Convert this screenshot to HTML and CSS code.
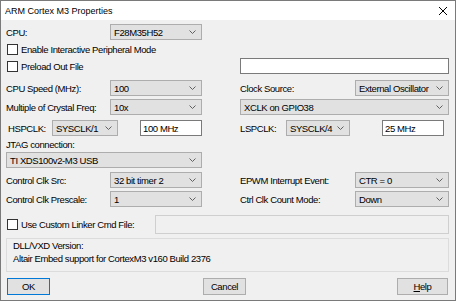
FILE: index.html
```html
<!DOCTYPE html>
<html lang="en">
<head>
    <meta charset="UTF-8">
    <title>ARM Cortex M3 Properties</title>
    <link rel="stylesheet" href="styles.css">
</head>
<body>
    <div class="dialog">
        <div class="titlebar">
            <span class="title">ARM Cortex M3 Properties</span>
            <svg class="close" width="10" height="10" viewBox="0 0 10 10"><path d="M1 1L9 9M9 1L1 9" stroke="#000" stroke-width="1"/></svg>
        </div>
        <div class="content">
            <div class="row r-cpu">
                <div class="half left">
                    <span class="lbl">CPU:</span>
                    <div class="combo">F28M35H52<svg class="chev" width="7" height="4" viewBox="0 0 7 4"><path d="M0.5 0.5L3.5 3.5L6.5 0.5" fill="none" stroke="#606060"/></svg></div>
                </div>
            </div>
            <div class="row r-check1">
                <label class="check"><span class="box"></span>Enable Interactive Peripheral Mode</label>
            </div>
            <div class="row r-preload">
                <div class="half left">
                    <label class="check"><span class="box"></span>Preload Out File</label>
                </div>
                <div class="half right">
                    <div class="edit full"></div>
                </div>
            </div>
            <div class="row r-speed">
                <div class="half left">
                    <span class="lbl">CPU Speed (MHz):</span>
                    <div class="combo">100<svg class="chev" width="7" height="4" viewBox="0 0 7 4"><path d="M0.5 0.5L3.5 3.5L6.5 0.5" fill="none" stroke="#606060"/></svg></div>
                </div>
                <div class="half right">
                    <span class="lbl">Clock Source:</span>
                    <div class="combo">External Oscillator<svg class="chev" width="7" height="4" viewBox="0 0 7 4"><path d="M0.5 0.5L3.5 3.5L6.5 0.5" fill="none" stroke="#606060"/></svg></div>
                </div>
            </div>
            <div class="row r-mult">
                <div class="half left">
                    <span class="lbl">Multiple of Crystal Freq:</span>
                    <div class="combo">10x<svg class="chev" width="7" height="4" viewBox="0 0 7 4"><path d="M0.5 0.5L3.5 3.5L6.5 0.5" fill="none" stroke="#606060"/></svg></div>
                </div>
                <div class="half right">
                    <div class="combo full">XCLK on GPIO38<svg class="chev" width="7" height="4" viewBox="0 0 7 4"><path d="M0.5 0.5L3.5 3.5L6.5 0.5" fill="none" stroke="#606060"/></svg></div>
                </div>
            </div>
            <div class="row r-clk">
                <div class="half left">
                    <span class="lbl short hs">HSPCLK:</span>
                    <div class="combo small">SYSCLK/1<svg class="chev" width="7" height="4" viewBox="0 0 7 4"><path d="M0.5 0.5L3.5 3.5L6.5 0.5" fill="none" stroke="#606060"/></svg></div>
                    <div class="edit mhz">100 MHz</div>
                </div>
                <div class="half right">
                    <span class="lbl short">LSPCLK:</span>
                    <div class="combo small">SYSCLK/4<svg class="chev" width="7" height="4" viewBox="0 0 7 4"><path d="M0.5 0.5L3.5 3.5L6.5 0.5" fill="none" stroke="#606060"/></svg></div>
                    <div class="edit mhz">25 MHz</div>
                </div>
            </div>
            <div class="row r-jtag-label">
                <span class="lbl">JTAG connection:</span>
            </div>
            <div class="row r-jtag">
                <div class="half left">
                    <div class="combo full">TI XDS100v2-M3 USB<svg class="chev" width="7" height="4" viewBox="0 0 7 4"><path d="M0.5 0.5L3.5 3.5L6.5 0.5" fill="none" stroke="#606060"/></svg></div>
                </div>
            </div>
            <div class="row r-src">
                <div class="half left">
                    <span class="lbl">Control Clk Src:</span>
                    <div class="combo">32 bit timer 2<svg class="chev" width="7" height="4" viewBox="0 0 7 4"><path d="M0.5 0.5L3.5 3.5L6.5 0.5" fill="none" stroke="#606060"/></svg></div>
                </div>
                <div class="half right">
                    <span class="lbl">EPWM Interrupt Event:</span>
                    <div class="combo">CTR = 0<svg class="chev" width="7" height="4" viewBox="0 0 7 4"><path d="M0.5 0.5L3.5 3.5L6.5 0.5" fill="none" stroke="#606060"/></svg></div>
                </div>
            </div>
            <div class="row r-pre">
                <div class="half left">
                    <span class="lbl">Control Clk Prescale:</span>
                    <div class="combo">1<svg class="chev" width="7" height="4" viewBox="0 0 7 4"><path d="M0.5 0.5L3.5 3.5L6.5 0.5" fill="none" stroke="#606060"/></svg></div>
                </div>
                <div class="half right">
                    <span class="lbl">Ctrl Clk Count Mode:</span>
                    <div class="combo">Down<svg class="chev" width="7" height="4" viewBox="0 0 7 4"><path d="M0.5 0.5L3.5 3.5L6.5 0.5" fill="none" stroke="#606060"/></svg></div>
                </div>
            </div>
            <div class="row r-linker">
                <label class="check linker"><span class="box"></span>Use Custom Linker Cmd File:</label>
                <div class="edit disabled"></div>
            </div>
            <div class="group">
                <div>DLL/VXD Version:</div>
                <div>Altair Embed support for CortexM3 v160 Build 2376</div>
            </div>
            <div class="buttons">
                <button class="btn default">OK</button>
                <button class="btn cancel">Cancel</button>
                <button class="btn help"><u>H</u>elp</button>
            </div>
        </div>
    </div>
</body>
</html>
```

FILE: styles.css
```css
body {
    margin: 0;
    padding: 0;
    font-family: "Liberation Sans", Arial, sans-serif;
    font-size: 9.5px;
    letter-spacing: -0.4px;
    color: #000;
}
.dialog {
    width: 456px;
    height: 301px;
    box-sizing: border-box;
    border: 1px solid #7a7a7a;
    background-color: #f0f0f0;
    display: flex;
    flex-direction: column;
}
.titlebar {
    height: 19px;
    background-color: #fff;
    display: flex;
    align-items: center;
    padding: 0 6px 0 4px;
}
.title {
    font-size: 9px;
    letter-spacing: 0;
    flex: 1;
}
.close {
    margin-right: 1px;
}
.content {
    padding: 4px 6px 0 5px;
    display: flex;
    flex-direction: column;
}
.row {
    display: flex;
    align-items: center;
    height: 16px;
}
.half {
    display: flex;
    align-items: center;
    height: 100%;
}
.half.left {
    width: 196px;
}
.half.right {
    width: 209px;
    margin-left: 38px;
}
.lbl {
    white-space: nowrap;
}
.half.left .lbl {
    width: 104px;
}
.half.right .lbl {
    width: 115px;
}
.combo {
    position: relative;
    box-sizing: border-box;
    height: 16px;
    flex: 1;
    background-color: #e1e1e1;
    border: 1px solid #adadad;
    padding-left: 3px;
    display: flex;
    align-items: center;
    white-space: nowrap;
}
.chev {
    position: absolute;
    right: 5px;
    top: 5px;
}
.edit {
    box-sizing: border-box;
    height: 16px;
    background-color: #fff;
    border: 1px solid #7a7a7a;
    padding-left: 2px;
    display: flex;
    align-items: center;
}
.full {
    flex: 1;
}
.check {
    display: flex;
    align-items: center;
    white-space: nowrap;
}
.box {
    width: 11px;
    height: 11px;
    box-sizing: border-box;
    border: 1px solid #333;
    background-color: #fff;
    margin: 0 3px 0 1px;
}
.r-check1 {
    margin-top: 3px;
    height: 13px;
}
.r-preload {
    margin-top: 2px;
}
.r-speed {
    margin-top: 6px;
}
.r-mult {
    margin-top: 3px;
}
.r-clk {
    margin-top: 5px;
}
.half.left .lbl.short,
.half.right .lbl.short {
    width: 46px;
}
.half.left .lbl.hs {
    width: 44px;
    margin-left: 2px;
}
.combo.small {
    flex: none;
    width: 66px;
}
.half.right .combo.small {
    width: 64px;
}
.edit.mhz {
    width: 62px;
    margin-left: 22px;
}
.half.right .edit.mhz {
    margin-left: 32px;
}
.r-jtag-label {
    margin-top: 1px;
    height: 14px;
}
.r-jtag {
    margin-top: 1px;
}
.r-src {
    margin-top: 4px;
}
.r-pre {
    margin-top: 3px;
}
.r-linker {
    margin-top: 8px;
    height: 19px;
}
.check.linker {
    width: 149px;
}
.edit.disabled {
    flex: 1;
    height: 19px;
    background-color: #f0f0f0;
    border-color: #cfcfcf;
}
.group {
    margin-top: 4px;
    height: 34px;
    box-sizing: border-box;
    border: 1px solid #dcdcdc;
    padding: 0 6px;
    line-height: 13px;
}
.buttons {
    display: flex;
    margin-top: 6px;
}
.btn {
    font-family: inherit;
    font-size: 9.5px;
    letter-spacing: -0.4px;
    height: 17px;
    width: 43px;
    padding: 0;
    background-color: #e1e1e1;
    border: 1px solid #adadad;
    color: #000;
}
.btn.default {
    margin-left: 1px;
    border-color: #0078d7;
}
.btn.cancel {
    margin-left: 153px;
}
.btn.help {
    width: 51px;
    margin-left: auto;
    margin-right: 1px;
}
```
